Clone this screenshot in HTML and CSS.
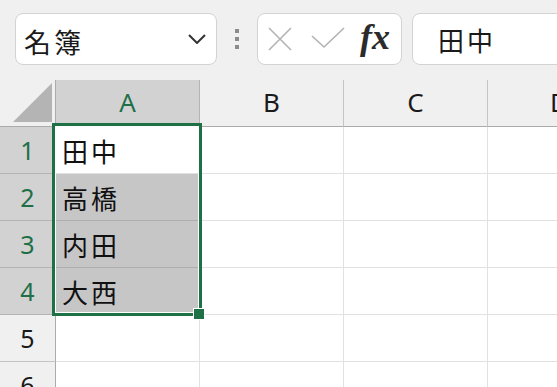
FILE: index.html
```html
<!DOCTYPE html>
<html lang="ja">
<head>
<meta charset="utf-8">
<link rel="stylesheet" href="styles.css">
</head>
<body>
<div class="toolbar">
  <div class="namebox">
    <span class="namebox-text">名簿</span>
    <svg class="chevron" width="18" height="10" viewBox="0 0 18 10"><polyline points="1,1 9,9 17,1" fill="none" stroke="#333" stroke-width="2"/></svg>
  </div>
  <div class="grip"><span></span><span></span><span></span></div>
  <div class="fbuttons">
    <svg class="ico-x" width="24" height="24" viewBox="0 0 24 24"><path d="M1 1 L23 23 M23 1 L1 23" stroke="#b3b3b3" stroke-width="1.6" fill="none"/></svg>
    <svg class="ico-check" width="34" height="22" viewBox="0 0 34 22"><polyline points="1,9 13,20 33,1" fill="none" stroke="#b3b3b3" stroke-width="1.6"/></svg>
    <span class="fx">fx</span>
  </div>
  <div class="finput"><span class="finput-text">田中</span></div>
</div>
<div class="sheet">
  <div class="grid">
    <div class="corner"><svg width="56" height="47" viewBox="0 0 56 47"><polygon points="52,3 52,42 13,42" fill="#b4b4b4"/></svg></div>
    <div class="colhead sel">A</div>
    <div class="colhead">B</div>
    <div class="colhead">C</div>
    <div class="colhead">D</div>

    <div class="rowhead sel">1</div>
    <div class="cell active">田中</div>
    <div class="cell"></div><div class="cell"></div><div class="cell"></div>

    <div class="rowhead sel">2</div>
    <div class="cell selected">高橋</div>
    <div class="cell"></div><div class="cell"></div><div class="cell"></div>

    <div class="rowhead sel">3</div>
    <div class="cell selected">内田</div>
    <div class="cell"></div><div class="cell"></div><div class="cell"></div>

    <div class="rowhead sel">4</div>
    <div class="cell selected last">大西</div>
    <div class="cell"></div><div class="cell"></div><div class="cell"></div>

    <div class="rowhead">5</div>
    <div class="cell"></div><div class="cell"></div><div class="cell"></div><div class="cell"></div>

    <div class="rowhead">6</div>
    <div class="cell"></div><div class="cell"></div><div class="cell"></div><div class="cell"></div>
  </div>
  <div class="selection"><div class="handle"></div></div>
</div>
</body>
</html>
```
FILE: styles.css
```css
html, body {
  margin: 0;
  padding: 0;
}
body {
  width: 557px;
  height: 387px;
  overflow: hidden;
  background: #ffffff;
  font-family: "Noto Sans", "Noto Sans CJK JP", sans-serif;
}
.toolbar {
  height: 80px;
  box-sizing: border-box;
  background: #f0f0f0;
  display: flex;
  align-items: flex-start;
  padding: 13px 0 0 15px;
  white-space: nowrap;
  overflow: hidden;
}
.toolbar > * {
  flex-shrink: 0;
}
.namebox {
  width: 202px;
  height: 52px;
  box-sizing: border-box;
  background: #fff;
  border: 1px solid #d3d3d3;
  border-radius: 8px;
  display: flex;
  align-items: center;
  padding: 4px 10px 0 8px;
}
.namebox-text {
  font-family: "Noto Sans CJK JP", sans-serif;
  font-size: 27px;
  letter-spacing: 3px;
  color: #1a1a1a;
  flex: 1;
}
.chevron {
  margin-top: -4px;
}
.grip {
  width: 4px;
  margin: 16px 18px 0 18px;
  display: flex;
  flex-direction: column;
  gap: 4px;
}
.grip span {
  width: 4px;
  height: 4px;
  background: #8c8c8c;
}
.fbuttons {
  width: 145px;
  height: 52px;
  box-sizing: border-box;
  background: #fff;
  border: 1px solid #d3d3d3;
  border-radius: 8px;
  display: flex;
  align-items: center;
  padding-left: 10px;
}
.ico-x {
  margin-top: -1px;
}
.ico-check {
  margin-left: 19px;
  margin-top: -2px;
}
.fx {
  margin-left: 15px;
  font-family: "Liberation Serif", serif;
  font-style: italic;
  font-weight: bold;
  font-size: 36px;
  color: #2b2b2b;
  margin-top: -4px;
}
.finput {
  margin-left: 10px;
  width: 200px;
  height: 52px;
  box-sizing: border-box;
  background: #fff;
  border: 1px solid #d3d3d3;
  border-radius: 8px;
  display: flex;
  align-items: center;
  padding-left: 25px;
}
.finput-text {
  font-family: "Noto Sans CJK JP", sans-serif;
  font-size: 26px;
  letter-spacing: 3px;
  color: #1a1a1a;
}
.sheet {
  position: relative;
}
.grid {
  display: grid;
  grid-template-columns: 56px 144px 144px 144px 144px;
  grid-auto-rows: 47px;
}
.grid > div {
  box-sizing: border-box;
  border-right: 1px solid #e1e1e1;
  border-bottom: 1px solid #e1e1e1;
}
.grid > .corner {
  background: #f0f0f0;
  border-right: 1px solid #ababab;
  border-bottom: 1px solid #ababab;
}
.corner svg {
  display: block;
}
.grid > .colhead {
  background: #f0f0f0;
  border-right: 1px solid #c4c4c4;
  border-bottom: 1px solid #ababab;
  display: flex;
  align-items: center;
  justify-content: center;
  font-size: 26px;
  color: #1a1a1a;
  padding-bottom: 3px;
}
.grid > .rowhead {
  background: #f0f0f0;
  border-right: 1px solid #ababab;
  border-bottom: 1px solid #c4c4c4;
  display: flex;
  align-items: center;
  justify-content: center;
  font-size: 25px;
  color: #1a1a1a;
}
.grid > .sel {
  background: #d2d2d2;
  color: #1f7048;
}
.grid > .colhead.sel {
  border-right-color: #b4b4b4;
}
.grid > .rowhead.sel {
  border-bottom-color: #b4b4b4;
}
.cell {
  display: flex;
  align-items: center;
  padding-left: 6px;
  font-family: "Noto Sans CJK JP", sans-serif;
  font-size: 26px;
  letter-spacing: 3px;
  color: #111;
}
.grid > .cell.selected {
  background: #c6c6c6;
  border-bottom-color: #adadad;
}
.selection {
  position: absolute;
  left: 52px;
  top: 43px;
  width: 150px;
  height: 193px;
  box-sizing: border-box;
  border: 3px solid #1e7145;
  box-shadow: inset 0 0 0 1px #ffffff;
}
.handle {
  position: absolute;
  right: -5px;
  bottom: -6px;
  width: 10px;
  height: 10px;
  box-sizing: border-box;
  background: #1e7145;
  outline: 1px solid #ffffff;
}
```
